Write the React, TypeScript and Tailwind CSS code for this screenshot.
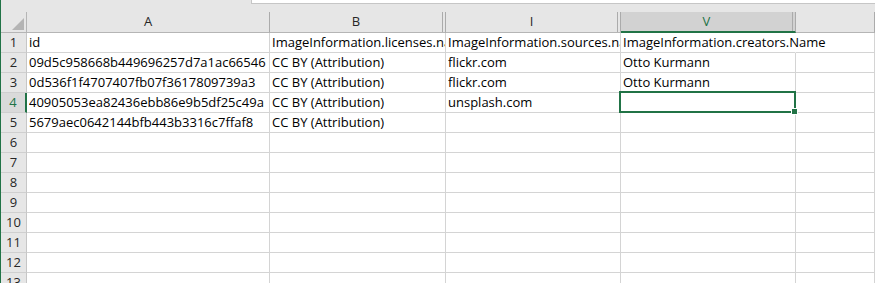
import React from 'react';

const COLUMNS = [
  { letter: 'A', width: 'w-[243px]', hiddenAfter: false },
  { letter: 'B', width: 'w-[176px]', hiddenAfter: true },
  { letter: 'I', width: 'w-[175px]', hiddenAfter: true },
  { letter: 'V', width: 'w-[175px]', hiddenAfter: true },
  { letter: '', width: 'flex-1', hiddenAfter: false },
];

const ROWS: string[][] = [
  ['id', 'ImageInformation.licenses.name', 'ImageInformation.sources.name', 'ImageInformation.creators.Name', ''],
  ['09d5c958668b449696257d7a1ac66546', 'CC BY (Attribution)', 'flickr.com', 'Otto Kurmann', ''],
  ['0d536f1f4707407fb07f3617809739a3', 'CC BY (Attribution)', 'flickr.com', 'Otto Kurmann', ''],
  ['40905053ea82436ebb86e9b5df25c49a', 'CC BY (Attribution)', 'unsplash.com', '', ''],
  ['5679aec0642144bfb443b3316c7ffaf8', 'CC BY (Attribution)', '', '', ''],
  ['', '', '', '', ''],
  ['', '', '', '', ''],
  ['', '', '', '', ''],
  ['', '', '', '', ''],
  ['', '', '', '', ''],
  ['', '', '', '', ''],
  ['', '', '', '', ''],
  ['', '', '', '', ''],
];

// text that spills into the empty cell to its right (row, col)
const SPILLS = ['0-3'];

const SELECTED_ROW = 4;
const SELECTED_COL = 'V';

export default function App() {
  return (
    <div className="flex w-[875px] h-[283px] overflow-hidden bg-white font-['Open_Sans',sans-serif] text-[13px] text-black">
      <div className="w-px shrink-0 bg-[#217346]" />

      <div className="flex-1 flex flex-col min-w-0">
        {/* formula bar edge */}
        <div className="flex h-[12px] shrink-0 bg-[#e6e6e6]">
          <div className="w-[250px] shrink-0" />
          <div className="flex-1 h-[4px] bg-white border-l border-b border-[#c6c6c6]" />
        </div>

        {/* column headers */}
        <div className="flex h-[21px] shrink-0 bg-[#e6e6e6] text-[#262626]">
          <div className="w-[26px] shrink-0 flex items-end justify-end pr-[2px] pb-[2px] border-r border-b border-[#b5b5b5]">
            <svg width="12" height="12" viewBox="0 0 12 12">
              <polygon points="12,0 12,12 0,12" fill="#b4b4b4" />
            </svg>
          </div>
          {COLUMNS.map((col, i) => (
            <ColumnHeader key={i} {...col} selected={col.letter === SELECTED_COL} />
          ))}
        </div>

        {ROWS.map((cells, r) => (
          <div key={r} className="flex h-[20px] shrink-0">
            <div
              className={`w-[26px] shrink-0 flex items-center justify-center border-b border-[#cfcfcf] ${
                r + 1 === SELECTED_ROW
                  ? 'bg-[#dadada] text-[#217346] border-r-2 border-r-[#217346]'
                  : 'bg-[#e6e6e6] text-[#262626] border-r border-r-[#c6c6c6]'
              }`}
            >
              {r + 1}
            </div>
            {cells.map((text, c) => {
              const isSelected = r + 1 === SELECTED_ROW && COLUMNS[c].letter === SELECTED_COL;
              const spills = SPILLS.includes(`${r}-${c}`);
              return (
                <div
                  key={c}
                  className={`${COLUMNS[c].width} shrink-0 relative flex items-center pl-[2px] border-b border-r border-b-[#d4d4d4] whitespace-nowrap ${
                    spills ? 'border-r-transparent' : 'border-r-[#d4d4d4]'
                  }`}
                >
                  <span className={`block w-full ${spills ? 'overflow-visible' : 'overflow-hidden'}`}>{text}</span>
                  {isSelected && (
                    <div className="absolute -left-[2px] -top-[2px] -right-[1px] -bottom-[1px] border-2 border-[#217346] z-10">
                      <div className="absolute -right-[4px] -bottom-[4px] w-[7px] h-[7px] bg-[#217346] border border-white" />
                    </div>
                  )}
                </div>
              );
            })}
          </div>
        ))}
      </div>
    </div>
  );
}

function ColumnHeader({
  letter,
  width,
  hiddenAfter,
  selected,
}: {
  letter: string;
  width: string;
  hiddenAfter: boolean;
  selected: boolean;
}) {
  return (
    <div
      className={`${width} shrink-0 flex border-r border-[#ababab] ${
        selected
          ? 'bg-[#d2d2d2] text-[#217346] border-b-2 border-b-[#217346]'
          : 'border-b border-b-[#b5b5b5]'
      }`}
    >
      <div className="flex-1 flex items-center justify-center">{letter}</div>
      {hiddenAfter && <div className="w-[3px] shrink-0 border-l border-[#ababab]" />}
    </div>
  );
}
